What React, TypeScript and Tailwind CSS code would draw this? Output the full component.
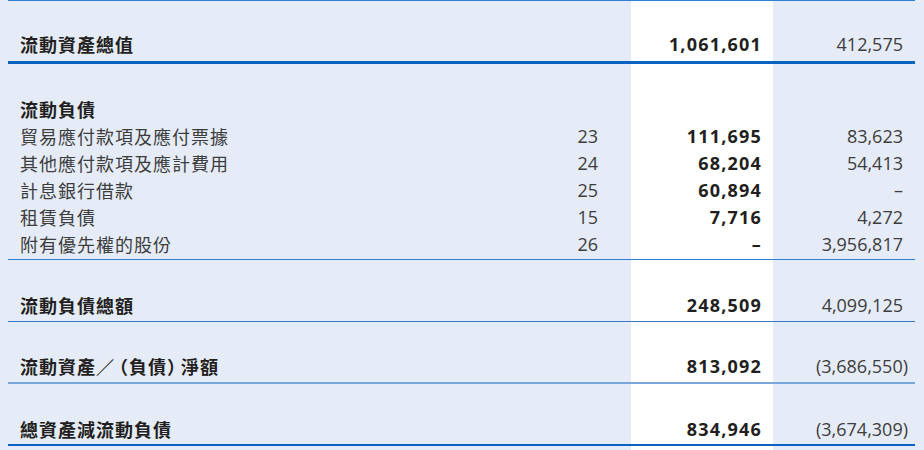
import React from "react";

const cjk = { fontFamily: '"Noto Sans CJK TC", "Noto Sans CJK SC", sans-serif' };
const num = { fontFamily: '"Open Sans", "Liberation Sans", sans-serif' };

type Row = {
  label: React.ReactNode;
  note?: string;
  cur?: string;
  prev?: string;
  bold?: boolean;
};

function Prev({ v }: { v?: string }) {
  if (!v) return null;
  if (v.startsWith("(") && v.endsWith(")")) {
    return (
      <span>
        {v.slice(0, -1)}
        <span className="mr-[-5px]">)</span>
      </span>
    );
  }
  return <span>{v}</span>;
}

function Line({ r }: { r: Row }) {
  return (
    <div className="contents">
      <div
        className={`pl-[12px] text-[18px] tracking-[1px] whitespace-nowrap ${
          r.bold ? "font-bold text-[#231f20]" : "text-[#3d3d3d]"
        }`}
        style={cjk}
      >
        {r.label}
      </div>
      <div className="text-right pr-[33px] text-[18px] text-[#3d3d3d]" style={num}>
        {r.note}
      </div>
      <div
        className="text-right pr-[11px] text-[18px] font-bold tracking-[1.2px] text-[#231f20]"
        style={num}
      >
        {r.cur}
      </div>
      <div className="text-right pr-[12px] text-[18px] text-[#3d3d3d]" style={num}>
        <Prev v={r.prev} />
      </div>
    </div>
  );
}

function Section({
  rows,
  pt,
  pb,
  line,
}: {
  rows: Row[];
  pt: string;
  pb: string;
  line: string;
}) {
  return (
    <div>
      <div className={`grid grid-cols-[552px_71px_142px_142px] leading-[27px] ${pt} ${pb}`}>
        {rows.map((r, i) => (
          <Line key={i} r={r} />
        ))}
      </div>
      <div className={`relative w-[907px] ${line}`} />
    </div>
  );
}

export default function App() {
  return (
    <div className="w-[924px] h-[450px] bg-[#e5ecf7] overflow-hidden">
      <div className="relative ml-[8px] w-[907px] h-[450px]">
        <div className="absolute top-0 bottom-0 left-[623px] w-[142px] bg-white" />
        <div className="relative">
          <div className="h-[1px] bg-[#2f7fd3]" />
          <Section
            rows={[{ label: "流動資產總值", cur: "1,061,601", prev: "412,575", bold: true }]}
            pt="pt-[30px]"
            pb="pb-[3px]"
            line="h-[3px] bg-[#0b63c1]"
          />
          <Section
            rows={[
              { label: "流動負債", bold: true },
              { label: "貿易應付款項及應付票據", note: "23", cur: "111,695", prev: "83,623" },
              { label: "其他應付款項及應計費用", note: "24", cur: "68,204", prev: "54,413" },
              { label: "計息銀行借款", note: "25", cur: "60,894", prev: "–" },
              { label: "租賃負債", note: "15", cur: "7,716", prev: "4,272" },
              { label: "附有優先權的股份", note: "26", cur: "–", prev: "3,956,817" },
            ]}
            pt="pt-[32px]"
            pb="pb-[1px]"
            line="h-[1px] bg-[#2a80d6]"
          />
          <Section
            rows={[{ label: "流動負債總額", cur: "248,509", prev: "4,099,125", bold: true }]}
            pt="pt-[32px]"
            pb="pb-[2px]"
            line="h-[1px] bg-[#3a78c2]"
          />
          <Section
            rows={[
              {
                label: (
                  <>
                    流動資產<span className="tracking-[-4px]">／</span>（負債
                    <span className="tracking-[-4px]">）</span>淨額
                  </>
                ),
                cur: "813,092",
                prev: "(3,686,550)",
                bold: true,
              },
            ]}
            pt="pt-[31px]"
            pb="pb-[2px]"
            line="h-[2px] bg-[#7aa6dc]"
          />
          <Section
            rows={[{ label: "總資產減流動負債", cur: "834,946", prev: "(3,674,309)", bold: true }]}
            pt="pt-[32px]"
            pb="pb-[1px]"
            line="h-[2px] bg-[#0b63c1]"
          />
        </div>
      </div>
    </div>
  );
}
